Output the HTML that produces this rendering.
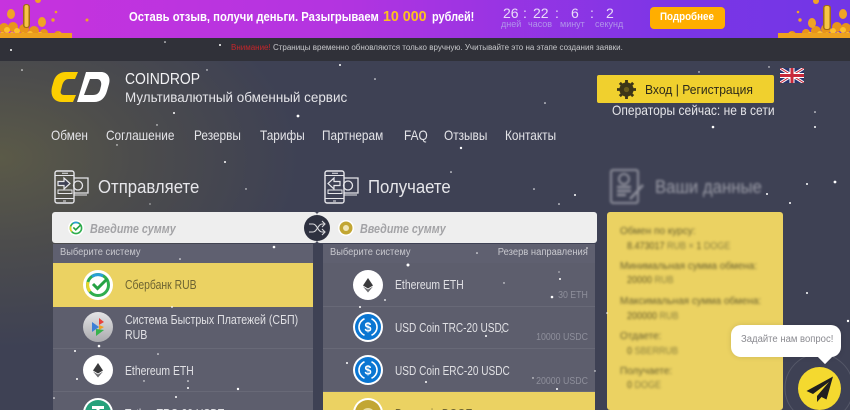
<!DOCTYPE html>
<html lang="ru"><head><meta charset="utf-8"><title>Coindrop</title>
<style>
*{box-sizing:border-box}
html,body{margin:0;padding:0;width:850px;height:410px;overflow:hidden}
body{font-family:"Liberation Sans",sans-serif;background:#3e4154}
#w{position:relative;width:850px;height:410px;overflow:hidden}
.a,.t{position:absolute}
.t{white-space:nowrap;line-height:1;transform-origin:0 50%}
.bg{left:0;top:38px;width:850px;height:372px;background:radial-gradient(ellipse 300px 190px at 0 120px,#5b5a48 0,#4c4c4c 45%,rgba(62,65,84,0) 100%),#3e4154}
.row{position:absolute;background:#5d5e6d;border-bottom:1px solid #686977}
.y{background:#ebd262}
.lt{color:#e0e0e4;font-size:13px;transform:scaleX(.8)}
.r{color:#8e8f9b;font-size:10px;text-align:right;transform-origin:100% 50%;transform:scaleX(.88)}
.blur{filter:blur(1.4px)}
.pt{color:#6b6231;font-size:10px}
.pv{color:#8d8240;font-size:10px;transform:scaleX(.9)}
.pv b{color:#665c28;font-weight:normal}
.n{font-size:14px;color:#e4e4e8;top:128px;transform:scaleX(.845)}
.c{font-size:14px;color:#e9dcf8;top:6px}
.l{font-size:9px;color:#b194ea;top:20px}
.h{font-size:18px;color:#e6e6ea;top:178px;transform:scaleX(.93)}
.i{font-size:13px;color:#a3a3a6;font-style:italic;font-weight:bold;top:222px;transform:scaleX(.83)}
.s{font-size:10px;color:#c8c8ce;top:248px;transform:scaleX(.93)}
</style></head><body><div id="w">
<svg width="0" height="0" style="position:absolute"><defs>
<g id="eth"><circle cx="15" cy="15" r="15" fill="#fff"/><path d="M15 8l-5 7.500 5 3 5-3z" fill="#3a3a3c"/><path d="M15 19.500l-5-3 5 6 5-6z" fill="#6c6c70"/></g>
<g id="usdc"><circle cx="15" cy="15" r="15" fill="#fff"/><circle cx="15" cy="15" r="13" fill="#0a76d2"/><path d="M11.500 6.700a9 9 0 0 0 0 16.600M18.500 6.700a9 9 0 0 1 0 16.600" fill="none" stroke="#fff" stroke-width="1.600"/><text x="15" y="19.500" font-size="12.500" font-family="Liberation Sans" font-weight="bold" text-anchor="middle" fill="#fff">$</text></g>
<g id="sber"><circle cx="15" cy="15" r="15" fill="#fff"/><circle cx="15" cy="15" r="10.500" fill="none" stroke="#2fae4e" stroke-width="3"/><path d="M5 12a10.500 10.500 0 0 0 2 9.500" fill="none" stroke="#e6d52c" stroke-width="3"/><path d="M9 6.500a10.500 10.500 0 0 1 11-.5" fill="none" stroke="#2a9fd8" stroke-width="3"/><path d="M10 14l4.500 4.500L24 9" fill="none" stroke="#25a244" stroke-width="3"/></g>
<g id="phone"><rect x="1" y="1" width="19" height="32" rx="2" fill="none" stroke="#e6e6ea" stroke-width="1.400"/><path d="M1 5.500h19M1 28.500h19M8 3.300h6M9 31h3" stroke="#e6e6ea" stroke-width="1"/><rect x="4" y="20" width="14" height="3.500" fill="none" stroke="#e6e6ea"/><path d="M20 8h14v15H20" fill="none" stroke="#e6e6ea" stroke-width="1.300"/><path d="M20 25h13" stroke="#e6e6ea"/><circle cx="24" cy="15.500" r="4.500" fill="none" stroke="#e6e6ea" stroke-width="1.300"/></g>
<g id="pile"><g fill="#e8951a"><circle cx="4" cy="28" r="5"/><circle cx="13" cy="27" r="5"/><circle cx="24" cy="29" r="5"/><circle cx="34" cy="31" r="5"/><circle cx="44" cy="33" r="4"/><circle cx="58" cy="35" r="4"/><circle cx="68" cy="36" r="3"/></g><g fill="#fdc12c"><circle cx="7" cy="30" r="3"/><circle cx="17" cy="31" r="3"/><circle cx="12" cy="35" r="3"/><circle cx="2" cy="35" r="3"/><circle cx="30" cy="34" r="3"/><circle cx="40" cy="35" r="3"/><circle cx="23" cy="35" r="2.500"/><circle cx="50" cy="36" r="2.500"/><circle cx="60" cy="35" r="2.500"/></g><path d="M0 38v-5h72v5z" fill="#eda21e"/></g>
</defs></svg>

<div class="a bg"></div>

<!-- top banner -->
<div class="a" style="left:0;top:0;width:850px;height:38px;background:linear-gradient(90deg,#c733de 0,#b334e0 40%,#7b35e6 80%,#7236e6 100%)"></div>
<svg class="a" style="left:0;top:0" width="90" height="38" viewBox="0 0 90 38"><use href="#pile"/>
<g fill="#f0a326"><ellipse cx="11" cy="14" rx="4" ry="5"/><ellipse cx="42" cy="22" rx="4" ry="5"/><circle cx="53" cy="20" r="1.700"/><circle cx="87" cy="20" r="1.500"/><circle cx="56" cy="12" r="1.300"/><circle cx="38" cy="0" r="3"/></g>
<rect x="23" y="4" width="7" height="24" rx="3" fill="#a06a18"/><rect x="24.500" y="5" width="4" height="22" rx="2" fill="#f7c544"/></svg>
<svg class="a" style="left:770px;top:0" width="80" height="38" viewBox="0 0 80 38"><g transform="translate(80 0) scale(-1 1)"><use href="#pile"/></g>
<g fill="#f0a326"><ellipse cx="42" cy="23" rx="4" ry="5"/><ellipse cx="73" cy="14" rx="4" ry="5"/><circle cx="30" cy="20" r="1.700"/><circle cx="28" cy="12" r="1.300"/><circle cx="46" cy="1" r="3"/></g>
<rect x="53" y="5" width="8" height="25" rx="3" fill="#a06a18"/><rect x="54.500" y="6" width="5" height="23" rx="2" fill="#f7c544"/></svg>
<div class="t" style="left:129px;top:10px;font-size:13px;color:#fff;font-weight:bold;transform:scaleX(.865)">Оставь отзыв, получи деньги. Разыгрываем</div>
<div class="t" style="left:383px;top:9px;font-size:15px;color:#fdc21e;font-weight:bold;transform:scaleX(.95)">10 000</div>
<div class="t" style="left:432px;top:10px;font-size:13px;color:#fff;font-weight:bold;transform:scaleX(.84)">рублей!</div>
<div class="t c" style="left:503px">26</div>
<div class="t c" style="left:523px">:</div>
<div class="t c" style="left:533px">22</div>
<div class="t c" style="left:555px">:</div>
<div class="t c" style="left:571px">6</div>
<div class="t c" style="left:590px">:</div>
<div class="t c" style="left:606px">2</div>
<div class="t l" style="left:501px">дней</div>
<div class="t l" style="left:528px">часов</div>
<div class="t l" style="left:560px">минут</div>
<div class="t l" style="left:595px">секунд</div>
<div class="a" style="left:650px;top:7px;width:75px;height:22px;background:#ffae00;border-radius:4px"></div>
<div class="t" style="left:660px;top:12px;font-size:11px;color:#fff;font-weight:bold;transform:scaleX(.89)">Подробнее</div>

<!-- notice -->
<div class="a" style="left:0;top:38px;width:850px;height:23px;background:#303139"></div>
<div class="t" style="left:231px;top:44px;font-size:8px;color:#c6c7ca"><span style="color:#c3262b">Внимание!</span> Страницы временно обновляются только вручную. Учитывайте это на этапе создания заявки.</div>

<!-- header -->
<svg class="a" style="left:51px;top:71px" width="60" height="32" viewBox="0 0 60 32">
<path d="M27 1H15C9 1 5 4 3 9L1 16C-1 25 3 31 11 31H22L25 24H13C10 24 9 22 10 19L11 15C12 11 14 8 18 8H24z" fill="#fccf00"/>
<path d="M35 1H50C56 1 60 6 58 13L56 20C54 27 50 31 43 31H26zM39 8L33 24H42C46 24 48 22 49 19L50 15C51 11 49 8 46 8z" fill="#fff" fill-rule="evenodd"/>
</svg>
<div class="t" style="left:125px;top:72px;font-size:16px;color:#f2f2f4;transform:scaleX(.87)">COINDROP</div>
<div class="t" style="left:125px;top:90px;font-size:14px;color:#e4e4e8;transform:scaleX(.96)">Мультивалютный обменный сервис</div>
<div class="t n" style="left:51px">Обмен</div>
<div class="t n" style="left:106px">Соглашение</div>
<div class="t n" style="left:194px">Резервы</div>
<div class="t n" style="left:260px">Тарифы</div>
<div class="t n" style="left:322px">Партнерам</div>
<div class="t n" style="left:404px">FAQ</div>
<div class="t n" style="left:444px">Отзывы</div>
<div class="t n" style="left:505px">Контакты</div>

<div class="a" style="left:597px;top:75px;width:177px;height:28px;background:#f0d02e;border-radius:2px"></div>
<svg class="a" style="left:617px;top:80px" width="19" height="19" viewBox="0 0 20 20"><circle cx="10" cy="10" r="5.500" fill="none" stroke="#3c3518" stroke-width="4"/><path d="M10 0v20M0 10h20M3 3l14 14M17 3L3 17" stroke="#3c3518" stroke-width="3"/><circle cx="10" cy="10" r="2.800" fill="#6a5c1c"/></svg>
<div class="t" style="left:645px;top:83px;font-size:13px;color:#2d2a1a;transform:scaleX(.93)">Вход | Регистрация</div>
<div class="t" style="left:612px;top:103px;font-size:14px;color:#e4e4e8;transform:scaleX(.86)">Операторы сейчас: не в сети</div>
<svg class="a" style="left:780px;top:68px" width="24" height="15" viewBox="0 0 24 15"><rect width="24" height="15" fill="#28346e"/><path d="M0 0l24 15M24 0L0 15" stroke="#fff" stroke-width="3"/><path d="M0 0l24 15M24 0L0 15" stroke="#c8283a" stroke-width="1"/><path d="M12 0v15M0 7.500h24" stroke="#fff" stroke-width="5"/><path d="M12 0v15M0 7.500h24" stroke="#c8283a" stroke-width="3"/></svg>

<!-- left column -->
<svg class="a" style="left:54px;top:170px" width="36" height="35" viewBox="0 0 36 35"><use href="#phone"/><path d="M4 11.500h6V8l6 5.500L10 19v-3.500H4z" fill="#3e4154" stroke="#e6e6ea" stroke-width="1.200"/></svg>
<div class="t h" style="left:98px">Отправляете</div>
<div class="a" style="left:52px;top:212px;width:265px;height:31px;background:#eeeeee;border-radius:3px"></div>
<svg class="a" style="left:68px;top:220px" width="16" height="16" viewBox="0 0 30 30"><use href="#sber"/></svg>
<div class="t i" style="left:90px">Введите сумму</div>
<div class="a" style="left:53px;top:244px;width:260px;height:19px;background:#5f6070"></div>
<div class="t s" style="left:60px">Выберите систему</div>
<div class="row y" style="left:53px;top:263px;width:260px;height:44px;border:0"></div>
<svg class="a" style="left:83px;top:270px" width="30" height="30" viewBox="0 0 30 30"><use href="#sber"/></svg>
<div class="t lt" style="left:125px;top:278px;color:#6d6432">Сбербанк RUB</div>
<div class="row" style="left:53px;top:307px;width:260px;height:42px"></div>
<svg class="a" style="left:83px;top:312px" width="30" height="30" viewBox="0 0 30 30"><defs><linearGradient id="g1" x1="0" y1="0" x2="0" y2="1"><stop offset="0" stop-color="#e4e4e6"/><stop offset="1" stop-color="#a9a9ad"/></linearGradient></defs><circle cx="15" cy="15" r="15" fill="url(#g1)"/><path d="M9 10l7 5-7 5z" fill="#3d7fd6"/><path d="M16 6l5 4-5 3z" fill="#e8423c"/><path d="M16 13l5 2-5 3z" fill="#f0a020"/><path d="M13 17l8 1-8 6z" fill="#37b24d"/></svg>
<div class="t lt" style="left:125px;top:312px;line-height:15px;transform:scaleX(.815);transform-origin:0 0">Система Быстрых Платежей (СБП)<br>RUB</div>
<div class="row" style="left:53px;top:349px;width:260px;height:43px"></div>
<svg class="a" style="left:83px;top:355px" width="30" height="30" viewBox="0 0 30 30"><use href="#eth"/></svg>
<div class="t lt" style="left:125px;top:364px">Ethereum ETH</div>
<div class="row" style="left:53px;top:392px;width:260px;height:18px;border:0"></div>
<svg class="a" style="left:83px;top:398px" width="30" height="30" viewBox="0 0 30 30"><circle cx="15" cy="15" r="15" fill="#fff"/><circle cx="15" cy="15" r="13" fill="#26a17b"/><path d="M9 8h12v3h-4.500v10h-3V11H9z" fill="#fff"/></svg>
<div class="t lt" style="left:125px;top:407px">Tether TRC-20 USDT</div>

<!-- right column -->
<svg class="a" style="left:324px;top:170px" width="36" height="35" viewBox="0 0 36 35"><use href="#phone"/><path d="M16 11.500h-6V8L4 13.500 10 19v-3.500h6z" fill="#3e4154" stroke="#e6e6ea" stroke-width="1.200"/></svg>
<div class="t h" style="left:368px">Получаете</div>
<div class="a" style="left:317px;top:212px;width:280px;height:31px;background:#eeeeee;border-radius:3px"></div>
<svg class="a" style="left:338px;top:220px" width="16" height="16" viewBox="0 0 16 16"><circle cx="8" cy="8" r="8" fill="#fff"/><circle cx="8" cy="8" r="6.500" fill="#c2a633"/><circle cx="8" cy="8" r="3" fill="#f0e6b8"/></svg>
<div class="t i" style="left:360px">Введите сумму</div>
<div class="a" style="left:323px;top:244px;width:272px;height:19px;background:#5f6070"></div>
<div class="t s" style="left:330px">Выберите систему</div>
<div class="t s" style="right:262px;transform-origin:100% 50%;transform:scaleX(.94)">Резерв направления</div>
<div class="row" style="left:323px;top:263px;width:272px;height:44px"></div>
<svg class="a" style="left:353px;top:270px" width="30" height="30" viewBox="0 0 30 30"><use href="#eth"/></svg>
<div class="t lt" style="left:395px;top:278px">Ethereum ETH</div>
<div class="t r" style="right:262px;top:291px">30 ETH</div>
<div class="row" style="left:323px;top:307px;width:272px;height:42px"></div>
<svg class="a" style="left:353px;top:312px" width="30" height="30" viewBox="0 0 30 30"><use href="#usdc"/></svg>
<div class="t lt" style="left:395px;top:321px;transform:scaleX(.775)">USD Coin TRC-20 USDC</div>
<div class="t r" style="right:262px;top:333px">10000 USDC</div>
<div class="row" style="left:323px;top:349px;width:272px;height:43px"></div>
<svg class="a" style="left:353px;top:355px" width="30" height="30" viewBox="0 0 30 30"><use href="#usdc"/></svg>
<div class="t lt" style="left:395px;top:364px;transform:scaleX(.775)">USD Coin ERC-20 USDC</div>
<div class="t r" style="right:262px;top:377px">20000 USDC</div>
<div class="row y" style="left:323px;top:392px;width:272px;height:18px;border:0"></div>
<svg class="a" style="left:353px;top:398px" width="30" height="30" viewBox="0 0 30 30"><circle cx="15" cy="15" r="15" fill="#fff"/><circle cx="15" cy="15" r="13" fill="#c2a633"/><circle cx="15" cy="17" r="7" fill="#e8dca0"/></svg>
<div class="t lt" style="left:395px;top:407px;color:#6d6432">Dogecoin DOGE</div>

<!-- switch -->
<svg class="a" style="left:304px;top:215px" width="26" height="26" viewBox="0 0 26 26"><circle cx="13" cy="13" r="13" fill="#2e3140"/><path d="M5 9h4c4 0 5 8 9 8h3M5 17h4c4 0 5-8 9-8h3M18 6l3 3-3 3M18 14l3 3-3 3" fill="none" stroke="#d8d8dc" stroke-width="1.100"/></svg>

<!-- data panel -->
<svg class="a blur" style="left:609px;top:168px" width="37" height="38" viewBox="0 0 37 38"><rect x="2" y="2" width="27" height="33" rx="2" fill="none" stroke="#8f909c" stroke-width="2"/><circle cx="15" cy="11" r="5" fill="none" stroke="#8f909c" stroke-width="2"/><path d="M8 19h14M8 23h14M8 27h9M21 31l13-14" stroke="#8f909c" stroke-width="2.500"/></svg>
<div class="t blur" style="left:655px;top:178px;font-size:18px;color:#9c9da8;transform:scaleX(.93)">Ваши данные</div>
<div class="a" style="left:607px;top:212px;width:176px;height:198px;background:#ebd262;border-radius:3px"></div>
<div class="blur">
<div class="t pt" style="left:620px;top:227px">Обмен по курсу:</div>
<div class="t pv" style="left:627px;top:242px"><b>8.473017</b> RUB × <b>1</b> DOGE</div>
<div class="t pt" style="left:620px;top:262px">Минимальная сумма обмена:</div>
<div class="t pv" style="left:627px;top:276px"><b>20000</b> RUB</div>
<div class="t pt" style="left:620px;top:297px">Максимальная сумма обмена:</div>
<div class="t pv" style="left:627px;top:312px"><b>200000</b> RUB</div>
<div class="t pt" style="left:620px;top:332px">Отдаете:</div>
<div class="t pv" style="left:627px;top:347px"><b>0</b> SBERRUB</div>
<div class="t pt" style="left:620px;top:367px">Получаете:</div>
<div class="t pv" style="left:627px;top:381px"><b>0</b> DOGE</div>
</div>

<!-- stars -->
<svg class="a" style="left:0;top:0" width="850" height="410" viewBox="0 0 850 410"><g fill="#fff">
<circle cx="11" cy="50" r="1"/><circle cx="165" cy="42" r=".8"/><circle cx="220" cy="45" r="1"/><circle cx="340" cy="65" r="1"/><circle cx="375" cy="79" r=".8"/><circle cx="298" cy="116" r="1.400"/><circle cx="22" cy="70" r=".8"/><circle cx="174" cy="113" r="1"/><circle cx="157" cy="125" r=".7"/><circle cx="117" cy="145" r=".7"/><circle cx="207" cy="70" r=".7"/><circle cx="713" cy="127" r="1.300"/><circle cx="815" cy="127" r="1"/><circle cx="545" cy="103" r=".8"/><circle cx="461" cy="148" r="1.200"/><circle cx="699" cy="72" r=".7"/><circle cx="769" cy="67" r=".7"/><circle cx="815" cy="112" r=".8"/><circle cx="225" cy="162" r="1"/><circle cx="274" cy="247" r="1.300"/><circle cx="180" cy="259" r=".8"/><circle cx="246" cy="189" r=".7"/><circle cx="150" cy="204" r=".6"/><circle cx="172" cy="307" r=".9"/><circle cx="99" cy="346" r="1.300"/><circle cx="75" cy="351" r="1"/><circle cx="158" cy="354" r=".8"/><circle cx="77" cy="379" r="1"/><circle cx="144" cy="381" r=".7"/><circle cx="188" cy="381" r=".8"/><circle cx="238" cy="389" r="1.200"/><circle cx="176" cy="397" r="1"/><circle cx="188" cy="388" r="1"/><circle cx="54" cy="398" r=".8"/><circle cx="408" cy="265" r="1.500"/><circle cx="477" cy="253" r=".8"/><circle cx="587" cy="248" r=".8"/><circle cx="451" cy="172" r=".8"/><circle cx="575" cy="195" r="1"/><circle cx="534" cy="189" r=".8"/><circle cx="559" cy="204" r=".8"/><circle cx="560" cy="279" r="1"/><circle cx="559" cy="272" r=".6"/><circle cx="504" cy="283" r=".7"/><circle cx="552" cy="297" r="1.300"/><circle cx="385" cy="300" r=".9"/><circle cx="360" cy="307" r="1"/><circle cx="486" cy="336" r="1"/><circle cx="347" cy="363" r="1"/><circle cx="426" cy="382" r="1"/><circle cx="557" cy="389" r="1"/><circle cx="595" cy="371" r=".7"/><circle cx="533" cy="378" r=".7"/><circle cx="502" cy="332" r=".7"/><circle cx="835" cy="182" r="1.400"/><circle cx="807" cy="184" r="1"/><circle cx="767" cy="194" r="1"/><circle cx="790" cy="203" r="1"/><circle cx="807" cy="293" r="1"/><circle cx="848" cy="321" r="1.200"/><circle cx="607" cy="313" r=".8"/>
</g></svg>

<!-- chat -->
<svg class="a" style="left:775px;top:345px" width="75" height="65" viewBox="0 0 75 65"><circle cx="44" cy="43" r="34" fill="none" stroke="rgba(255,255,255,.12)" stroke-width="1"/></svg>
<div class="a" style="left:731px;top:325px;width:110px;height:32px;background:#fff;border-radius:10px;box-shadow:0 0 6px rgba(0,0,0,.12)"></div>
<div class="a" style="left:820px;top:352px;width:10px;height:10px;background:#fff;transform:rotate(45deg)"></div>
<div class="t" style="left:741px;top:335px;font-size:10px;color:#8a8a90;transform:scaleX(.95)">Задайте нам вопрос!</div>
<div class="a" style="left:798px;top:367px;width:43px;height:43px;border-radius:50%;background:#f4d92f"></div>
<svg class="a" style="left:806px;top:376px" width="27" height="27" viewBox="0 0 27 27"><path d="M27 .500L.500 15l6.500 3 16-12-12 14v6l4.500-5 5 2.500z" fill="#1f1f1f"/></svg>
</div></body></html>
